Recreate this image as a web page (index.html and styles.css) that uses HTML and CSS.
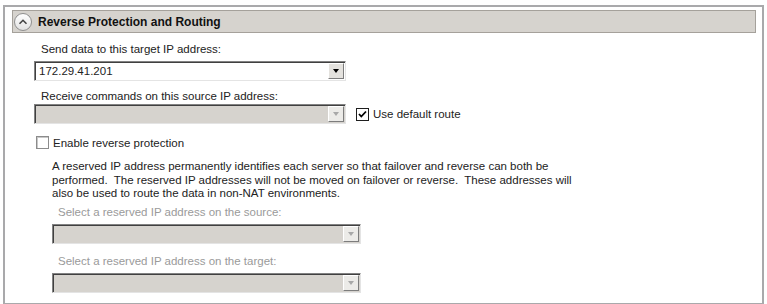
FILE: index.html
```html
<!DOCTYPE html>
<html lang="en">
<head>
    <meta charset="UTF-8">
    <title>Reverse Protection and Routing</title>
    <link rel="stylesheet" href="styles.css">
</head>
<body>
    <div class="panel">
        <div class="section-header">
            <span class="toggle">
                <svg width="16" height="16" viewBox="0 0 16 16">
                    <path d="M4.5 9.8 L8 6.3 L11.5 9.8" fill="none" stroke="#444" stroke-width="1.6"/>
                </svg>
            </span>
            <span class="section-title">Reverse Protection and Routing</span>
        </div>

        <div class="section-body">
            <div class="label">Send data to this target IP address:</div>
            <div class="combo">
                <div class="combo-value">172.29.41.201</div>
                <div class="combo-btn"><span class="arrow"></span></div>
            </div>

            <div class="label tight">Receive commands on this source IP address:</div>
            <div class="row">
                <div class="combo disabled">
                    <div class="combo-value"></div>
                    <div class="combo-btn"><span class="arrow"></span></div>
                </div>
                <label class="check">
                    <span class="box checked">
                        <svg width="11" height="11" viewBox="0 0 11 11">
                            <path d="M2 5 L4.3 7.5 L9 2.5" fill="none" stroke="#000" stroke-width="1.8"/>
                        </svg>
                    </span>
                    Use default route
                </label>
            </div>

            <label class="check enable">
                <span class="box"></span>
                Enable reverse protection
            </label>

            <div class="reserved">
                <p class="note">A reserved IP address permanently identifies each server so that failover and reverse can both be<br>
                performed.&nbsp; The reserved IP addresses will not be moved on failover or reverse.&nbsp; These addresses will<br>
                also be used to route the data in non-NAT environments.</p>

                <div class="label muted">Select a reserved IP address on the source:</div>
                <div class="combo disabled short">
                    <div class="combo-value"></div>
                    <div class="combo-btn"><span class="arrow"></span></div>
                </div>

                <div class="label muted">Select a reserved IP address on the target:</div>
                <div class="combo disabled short">
                    <div class="combo-value"></div>
                    <div class="combo-btn"><span class="arrow"></span></div>
                </div>
            </div>
        </div>
    </div>
</body>
</html>
```

FILE: styles.css
```css
body {
    margin: 0;
    padding: 5px 3px 0 3px;
    font-family: "Liberation Sans", Arial, sans-serif;
    font-size: 11.5px;
    color: #222;
    background: #ffffff;
}
.panel {
    height: 293px;
    border: 2px solid #a9a9ab;
    padding: 3px 6px 0 7px;
    background: #fff;
}
.section-header {
    display: flex;
    align-items: center;
    height: 21px;
    border: 1px solid #a5a19b;
    background: #d6d3ce;
    padding-left: 1px;
}
.toggle {
    width: 16px;
    height: 16px;
    border: 1px solid #8f8f8f;
    border-radius: 50%;
    background: linear-gradient(#ffffff, #e2e2e2);
    display: flex;
    align-items: center;
    justify-content: center;
}
.toggle svg {
    display: block;
}
.section-title {
    margin-left: 6px;
    font-weight: bold;
    font-size: 12px;
    color: #111;
}
.section-body {
    padding-left: 22px;
    padding-top: 10px;
}
.label {
    padding-left: 7px;
    line-height: 13px;
    margin-bottom: 5px;
}
.label.tight {
    margin-bottom: 1px;
}
.label.muted {
    color: #9a9a9a;
    padding-left: 6px;
    margin-bottom: 5px;
}
.combo {
    display: flex;
    width: 312px;
    height: 20px;
    box-sizing: border-box;
    border-top: 1px solid #828282;
    border-left: 1px solid #828282;
    border-right: 1px solid #e4e4e4;
    border-bottom: 1px solid #e4e4e4;
    box-shadow: inset 1px 1px 0 #404040;
    background: #fff;
    margin-bottom: 9px;
}
.combo.short {
    width: 309px;
    margin-bottom: 11px;
}
.combo-value {
    flex: 1;
    padding: 2px 0 0 4px;
    line-height: 15px;
}
.combo-btn {
    width: 16px;
    height: 16px;
    margin: 1px 1px 0 0;
    box-sizing: border-box;
    background: #e4e2de;
    border-top: 1px solid #fff;
    border-left: 1px solid #fff;
    border-right: 1px solid #7d7d7d;
    border-bottom: 1px solid #7d7d7d;
    display: flex;
    align-items: center;
    justify-content: center;
}
.arrow {
    width: 0;
    height: 0;
    border-left: 3.5px solid transparent;
    border-right: 3.5px solid transparent;
    border-top: 4px solid #000;
}
.combo.disabled {
    background: #d6d3ce;
}
.combo.disabled .combo-btn {
    background: #ecebe8;
}
.combo.disabled .arrow {
    border-top-color: #a8a8a8;
}
.row {
    display: flex;
    align-items: center;
    gap: 10px;
}
.row .combo {
    margin-bottom: 0;
}
.check {
    display: flex;
    align-items: center;
    gap: 4px;
}
.box {
    width: 13px;
    height: 13px;
    box-sizing: border-box;
    border: 1px solid #1e1e1e;
    background: #fff;
    display: flex;
    align-items: center;
    justify-content: center;
}
.check.enable {
    margin-top: 12px;
    padding-left: 2px;
}
.check.enable .box {
    border-color: #8c8c8c;
    box-shadow: inset 1px 1px 0 #c8c8c8;
}
.reserved {
    padding-left: 18px;
    margin-top: 11px;
}
.note {
    margin: 0 0 5px 0;
    line-height: 13.5px;
}
```
